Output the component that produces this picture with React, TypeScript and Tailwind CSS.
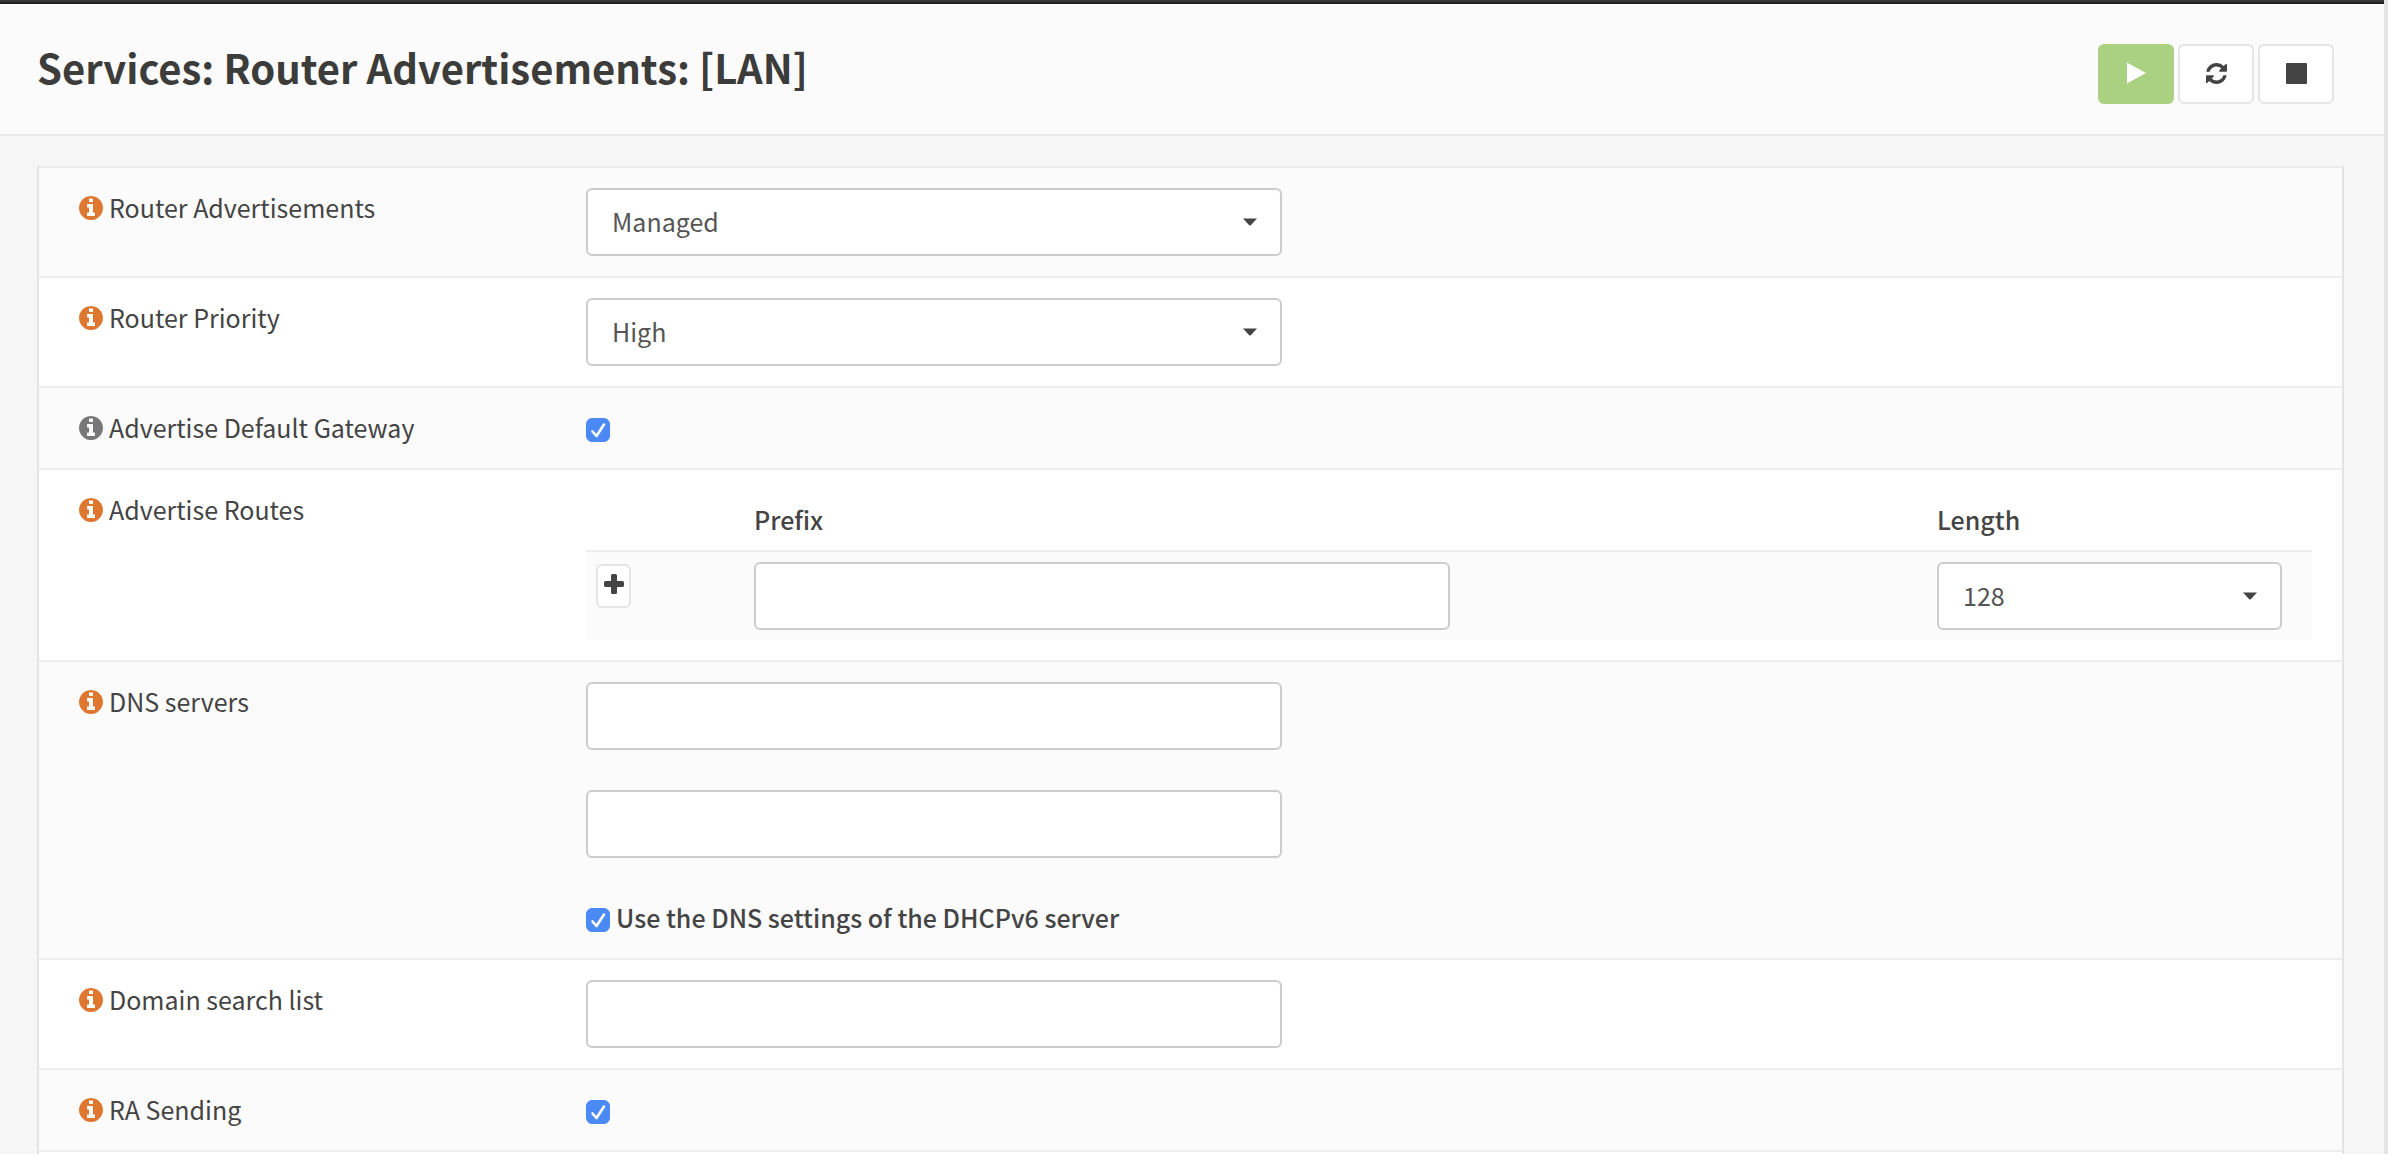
import type { ReactNode } from "react";

const INFO =
  "M1024 1248v-160q0-14-9-23t-23-9h-96V544q0-14-9-23t-23-9H544q-14 0-23 9t-9 23v160q0 14 9 23t23 9h96v320h-96q-14 0-23 9t-9 23v160q0 14 9 23t23 9h448q14 0 23-9t9-23zM896 352V192q0-14-9-23t-23-9H672q-14 0-23 9t-9 23v160q0 14 9 23t23 9h192q14 0 23-9t9-23zm640 416q0 209-103 385.5T1153.500 1433 768 1536t-385.500-103T103 1153.500 0 768t103-385.500T382.500 103 768 0t385.500 103T1433 382.500 1536 768z";
const REFRESH =
  "M1511 928q0 5-1 7-64 268-268 434.500T764 1536q-146 0-282.500-55T238 1324l-129 129q-19 19-45 19t-45-19-19-45V960q0-26 19-45t45-19h448q26 0 45 19t19 45-19 45l-137 137q71 66 161 102t187 36q134 0 250-65t186-179q11-17 53-117 8-23 30-23h192q13 0 22.500 9.500t9.500 22.500zm25-800v448q0 26-19 45t-45 19h-448q-26 0-45-19t-19-45 19-45l138-138Q969 256 768 256q-134 0-250 65T332 500q-11 17-53 117-8 23-30 23H50q-13 0-22.500-9.500T18 608v-7q65-268 270-434.500T768 0q146 0 284 55.500T1297 212l130-129q19-19 45-19t45 19 19 45z";

const field = "h-[68px] w-full rounded-md border-2 border-[#ccc] bg-white px-6 text-[25px] leading-10 text-[#555]";

function Select({ id, label, value, className }: { id: string; label?: string; value: string; className: string }) {
  return (
    <div className={`relative ${className}`}>
      <select id={id} aria-label={label} defaultValue={value} className={`${field} block appearance-none pb-0.5`}>
        <option>{value}</option>
      </select>
      <svg viewBox="0 0 14 8" className="pointer-events-none absolute top-[30px] right-[25px] h-2 w-3.5 fill-[#444]">
        <path d="M0 0.500h14L8 7q-1 1-2 0z" />
      </svg>
    </div>
  );
}

function Check({ id }: { id: string }) {
  return (
    <span className="relative block size-6 shrink-0">
      <input id={id} type="checkbox" defaultChecked className="peer block size-6 appearance-none rounded-md border border-gray-400 bg-white checked:border-[#4b8af4] checked:bg-[#4b8af4]" />
      <svg viewBox="0 0 24 24" className="pointer-events-none absolute inset-0 hidden size-6 fill-none stroke-white stroke-[2.6] peer-checked:block">
        <path d="M6.500 13.500l4 4.500 7.500-11.500" strokeLinecap="round" strokeLinejoin="round" />
      </svg>
    </span>
  );
}

function Row({ id, label, muted, children }: { id: string; label: string; muted?: boolean; children: ReactNode }) {
  return (
    <div className="grid grid-cols-[507px_minmax(0,1fr)] border-b-2 border-[#ededed] py-5 pr-[30px] pl-10 odd:bg-[#fbfbfb] even:bg-white">
      <div className="flex items-start gap-1.5">
        <svg viewBox="0 0 1536 1536" className={muted ? "mt-2 size-6 fill-[#777]" : "mt-2 size-6 fill-[#de7830]"}>
          <path d={INFO} />
        </svg>
        <label htmlFor={id} className="leading-[38px]">{label}</label>
      </div>
      <div>{children}</div>
    </div>
  );
}

export default function App() {
  return (
    <div className="h-screen overflow-hidden border-r-4 border-[#e4e4e4] bg-[#f6f6f6] font-['Noto_Sans_CJK_SC','Noto_Sans',sans-serif] text-[25px] text-[#444]">
      <div className="h-1 border-b-2 border-[#222] bg-[#3a3a3a]" />
      <header className="flex h-[132px] items-start justify-between border-b-2 border-[#e8e8e8] bg-[#fbfbfb] pt-10 pr-[50px] pl-[37px]">
        <h1 className="text-[40px] leading-[46px] font-bold text-[#3c3c3b]">Services: Router Advertisements: [LAN]</h1>
        <div className="flex gap-1">
          <button aria-label="Start" className="flex h-[60px] w-[76px] justify-center rounded-md bg-[#a9d181] pt-[18px]">
            <svg viewBox="0 0 20 22" className="h-[22px] w-5 fill-white"><path d="M1 0.500v21L20 11z" /></svg>
          </button>
          <button aria-label="Restart" className="flex h-[60px] w-[76px] justify-center rounded-md border-2 border-[#e5e5e5] bg-white pt-[17px]">
            <svg viewBox="0 0 1536 1536" className="size-[21px] fill-[#444]"><path d={REFRESH} /></svg>
          </button>
          <button aria-label="Stop" className="flex h-[60px] w-[76px] justify-center rounded-md border-2 border-[#e5e5e5] bg-white pt-[17px]">
            <svg viewBox="0 0 21 21" className="size-[21px] fill-[#444]"><rect width="21" height="21" rx="1" /></svg>
          </button>
        </div>
      </header>
      <form className="mt-[30px] mr-10 ml-[37px] border-x-2 border-[#e4e4e4]">
        <div className="h-0.5 bg-[#ededed]" />
        <div>
          <Row id="mode" label="Router Advertisements">
            <Select id="mode" value="Managed" className="max-w-[696px]" />
          </Row>
          <Row id="priority" label="Router Priority">
            <Select id="priority" value="High" className="max-w-[696px]" />
          </Row>
          <Row id="gateway" label="Advertise Default Gateway" muted>
            <div className="pt-2.5 pb-1.5"><Check id="gateway" /></div>
          </Row>
          <Row id="prefix" label="Advertise Routes">
            <table className="w-full table-fixed border-separate border-spacing-0 text-left">
              <thead>
                <tr className="h-[62px]">
                  <td className="w-[158px] border-b-2 border-[#ededed]" />
                  <th className="border-b-2 border-[#ededed] px-2.5 pt-0 pb-px font-medium">Prefix</th>
                  <th className="w-[385px] border-b-2 border-[#ededed] px-2.5 pt-0 pb-px font-medium">Length</th>
                </tr>
              </thead>
              <tbody>
                <tr className="bg-[#fbfbfb]">
                  <td className="px-2.5 py-3 align-top">
                    <button type="button" aria-label="Add route" className="flex h-11 w-[35px] items-start justify-center rounded-md border-2 border-[#e5e5e5] bg-white pt-2">
                      <svg viewBox="0 0 20 20" className="size-5 fill-[#444]">
                        <path d="M8.500 0h3a1.500 1.500 0 0 1 1.500 1.500V7h5.500A1.500 1.500 0 0 1 20 8.500v3a1.500 1.500 0 0 1-1.500 1.500H13v5.500a1.500 1.500 0 0 1-1.500 1.500h-3A1.500 1.500 0 0 1 7 18.500V13H1.500A1.500 1.500 0 0 1 0 11.500v-3A1.500 1.500 0 0 1 1.500 7H7V1.500A1.500 1.500 0 0 1 8.500 0z" />
                      </svg>
                    </button>
                  </td>
                  <td className="p-2.5"><input id="prefix" type="text" className={`${field} block max-w-[696px]`} /></td>
                  <td className="py-2.5 pr-[30px] pl-2.5"><Select id="length" label="Length" value="128" className="w-full" /></td>
                </tr>
              </tbody>
            </table>
          </Row>
          <Row id="dns1" label="DNS servers">
            <div className="flex flex-col gap-10">
              <input id="dns1" type="text" className={`${field} max-w-[696px]`} />
              <input aria-label="Secondary DNS server" type="text" className={`${field} max-w-[696px]`} />
              <div className="flex h-10 items-start gap-1.5">
                <div className="pt-2.5"><Check id="usedns" /></div>
                <label htmlFor="usedns" className="leading-[38px] font-medium">Use the DNS settings of the DHCPv6 server</label>
              </div>
            </div>
          </Row>
          <Row id="domains" label="Domain search list">
            <input id="domains" type="text" className={`${field} block max-w-[696px]`} />
          </Row>
          <Row id="sending" label="RA Sending">
            <div className="pt-2.5 pb-1.5"><Check id="sending" /></div>
          </Row>
          <div className="h-10 bg-white" />
        </div>
      </form>
    </div>
  );
}
